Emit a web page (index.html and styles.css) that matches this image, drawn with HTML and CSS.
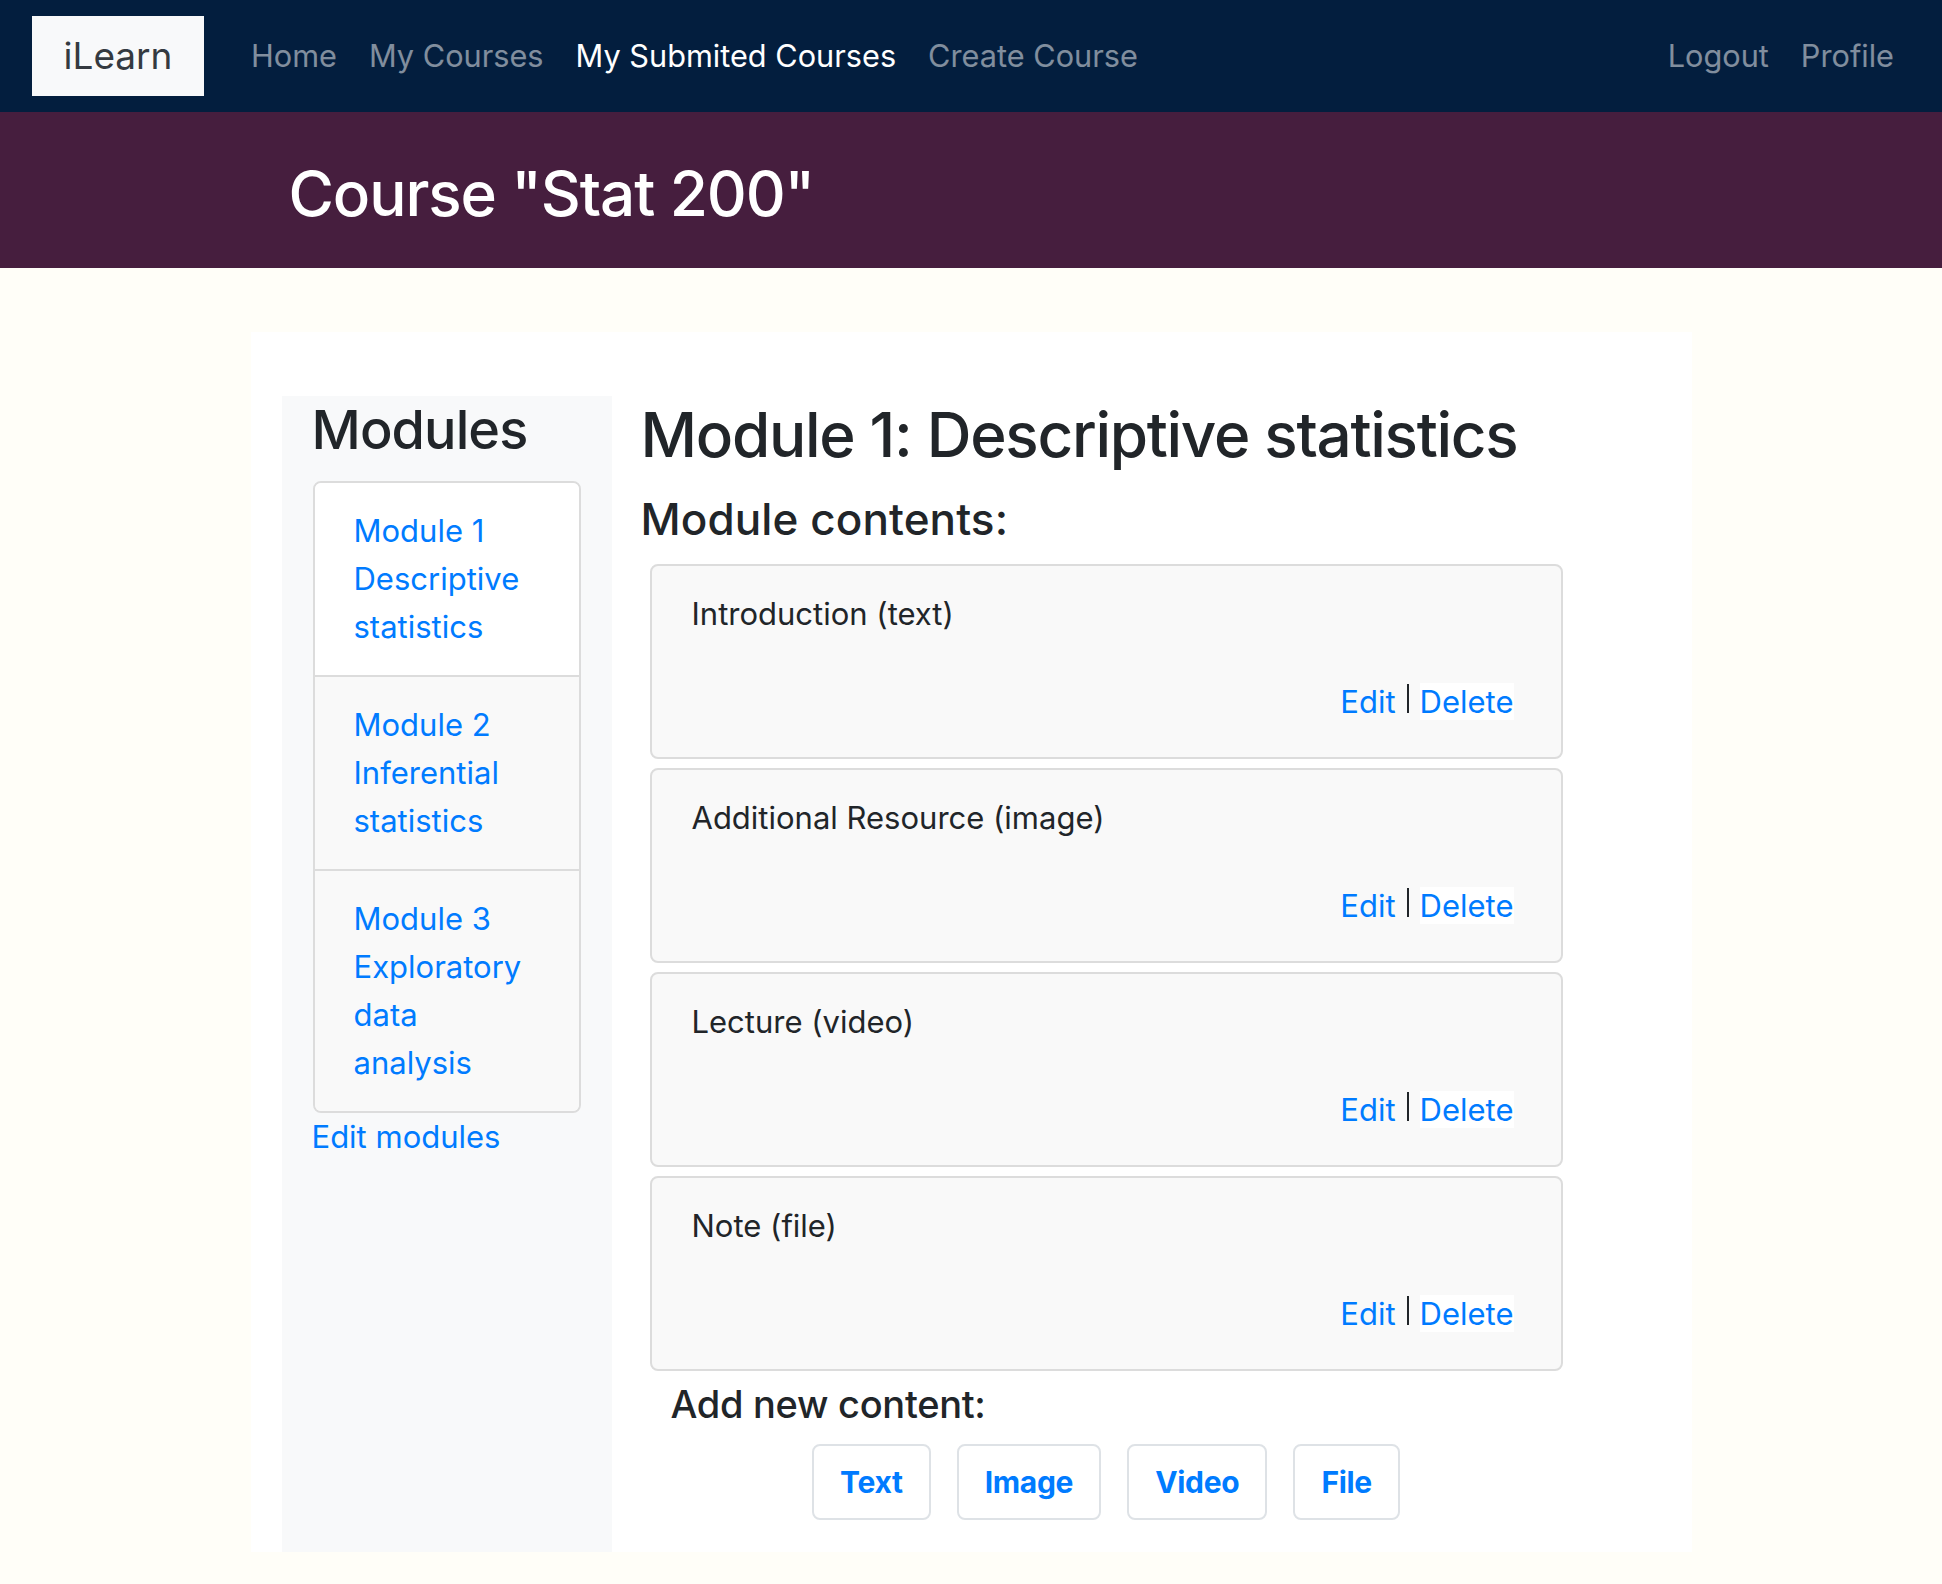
FILE: index.html
```html
<!DOCTYPE html>
<html lang="en">
<head>
<meta charset="utf-8">
<title>iLearn - Course Stat 200</title>
<link rel="stylesheet" href="styles.css">
</head>
<body>
<nav class="navbar">
  <a class="brand" href="#">iLearn</a>
  <div class="nav-left">
    <a class="nav-link" href="#">Home</a>
    <a class="nav-link" href="#">My Courses</a>
    <a class="nav-link active" href="#">My Submited Courses</a>
    <a class="nav-link" href="#">Create Course</a>
  </div>
  <div class="nav-right">
    <a class="nav-link" href="#">Logout</a>
    <a class="nav-link" href="#">Profile</a>
  </div>
</nav>

<header class="banner">
  <div class="banner-inner">
    <h1 class="banner-title">Course "Stat 200"</h1>
  </div>
</header>

<main class="page">
  <div class="row">
    <aside class="sidebar">
      <h3 class="sidebar-title">Modules</h3>
      <ul class="list-group">
        <li class="list-item first"><a href="#">Module 1 Descriptive statistics</a></li>
        <li class="list-item"><a href="#">Module 2 Inferential statistics</a></li>
        <li class="list-item"><a href="#">Module 3 Exploratory data analysis</a></li>
      </ul>
      <a class="edit-modules" href="#">Edit modules</a>
    </aside>

    <section class="content">
      <h2 class="module-title">Module 1: Descriptive statistics</h2>
      <h4 class="contents-title">Module contents:</h4>

      <div class="item-card">
        <div class="item-name">Introduction (text)</div>
        <div class="item-actions"><a href="#">Edit</a><span class="sep"></span><span class="delete">Delete</span></div>
      </div>
      <div class="item-card">
        <div class="item-name">Additional Resource (image)</div>
        <div class="item-actions"><a href="#">Edit</a><span class="sep"></span><span class="delete">Delete</span></div>
      </div>
      <div class="item-card">
        <div class="item-name">Lecture (video)</div>
        <div class="item-actions"><a href="#">Edit</a><span class="sep"></span><span class="delete">Delete</span></div>
      </div>
      <div class="item-card">
        <div class="item-name">Note (file)</div>
        <div class="item-actions"><a href="#">Edit</a><span class="sep"></span><span class="delete">Delete</span></div>
      </div>

      <h5 class="add-title">Add new content:</h5>
      <div class="add-buttons">
        <button class="btn" type="button">Text</button>
        <button class="btn" type="button">Image</button>
        <button class="btn" type="button">Video</button>
        <button class="btn" type="button">File</button>
      </div>
    </section>
  </div>
</main>
</body>
</html>
```

FILE: styles.css
```css
* {
  box-sizing: border-box;
}

body {
  margin: 0;
  background: #fffef8;
  font-family: "Inter", "Liberation Sans", sans-serif;
  font-size: 32px;
  line-height: 48px;
  color: #212529;
}

a {
  color: #007bff;
  text-decoration: none;
}

/* ---------- navbar ---------- */
.navbar {
  display: flex;
  align-items: center;
  height: 112px;
  padding: 0 32px;
  background: #031e3e;
}

.brand {
  display: block;
  width: 172px;
  height: 80px;
  margin-right: 31px;
  background: #f8f9fa;
  color: #343a40;
  font-size: 37px;
  line-height: 80px;
  text-align: center;
}

.nav-left,
.nav-right {
  display: flex;
  align-items: center;
}

.nav-right {
  margin-left: auto;
}

.nav-link {
  display: block;
  padding: 8px 16px;
  font-size: 30.7px;
  line-height: 48px;
  color: rgba(255, 255, 255, 0.5);
}

.nav-link.active {
  color: #fff;
}

/* ---------- banner ---------- */
.banner {
  background: #461e3e;
  height: 156px;
  padding-top: 43px;
}

.banner-inner {
  width: 1441px;
  margin: 0 auto;
  padding-left: 38px;
}

.banner-title {
  margin: 0;
  font-size: 62px;
  line-height: 77px;
  font-weight: 500;
  letter-spacing: -1.1px;
  color: #fff;
}

/* ---------- page ---------- */
.page {
  width: 1441px;
  margin: 64px auto 0;
  padding: 64px 30px 0 31px;
  background: #fff;
}

.row {
  display: flex;
  align-items: stretch;
}

.sidebar {
  flex: 0 0 330px;
  background: #f8f9fa;
  padding: 0 30px 0 30px;
}

.sidebar-title {
  margin: 0 0 18px;
  font-size: 54px;
  line-height: 67px;
  font-weight: 500;
  letter-spacing: -0.9px;
}

.list-group {
  list-style: none;
  margin: 0 0 0 1px;
  padding: 0;
  width: 268px;
  border: 2px solid #dcdcdc;
  border-radius: 8px;
  overflow: hidden;
}

.list-item {
  padding: 24px 38px 24px 39px;
  background: #f9f9f9;
  border-top: 2px solid #dcdcdc;
  font-size: 31px;
}

.list-item.first {
  background: #fff;
  border-top: 0;
}

.edit-modules {
  display: block;
  margin-top: 0;
  font-size: 31px;
}

/* ---------- content ---------- */
.content {
  flex: 1;
  margin-left: 29px;
}

.module-title {
  margin: 0 0 20px;
  font-size: 62px;
  line-height: 77px;
  font-weight: 500;
  letter-spacing: -1.3px;
}

.contents-title {
  margin: 0 0 18px;
  font-size: 44px;
  line-height: 53px;
  font-weight: 500;
  letter-spacing: 0.1px;
}

.item-card {
  width: 913px;
  margin: 0 0 9px 9px;
  padding: 24px 40px 31px;
  background: #f9f9f9;
  border: 2px solid #dcdcdc;
  border-radius: 8px;
}

.item-name {
  margin-bottom: 40px;
  font-size: 31px;
}

.item-actions {
  text-align: right;
  padding-right: 7px;
  font-size: 31px;
}

.sep {
  display: inline-block;
  width: 2px;
  height: 29px;
  margin: 0 11px 0 11px;
  background: #212529;
  vertical-align: baseline;
}

.delete {
  background: #fff;
  color: #007bff;
}

.add-title {
  margin: 9px 0 16px 30px;
  font-size: 38px;
  line-height: 48px;
  font-weight: 500;
  letter-spacing: -0.3px;
}

.add-buttons {
  display: flex;
  justify-content: center;
  gap: 26px;
  width: 913px;
  margin: 0 0 32px 9px;
}

.btn {
  padding: 12px 26px;
  background: #fff;
  border: 2px solid #dee2e6;
  border-radius: 8px;
  color: #007bff;
  font-family: "Inter", "Liberation Sans", sans-serif;
  font-size: 30px;
  line-height: 48px;
  font-weight: 700;
  letter-spacing: -0.3px;
}
```
